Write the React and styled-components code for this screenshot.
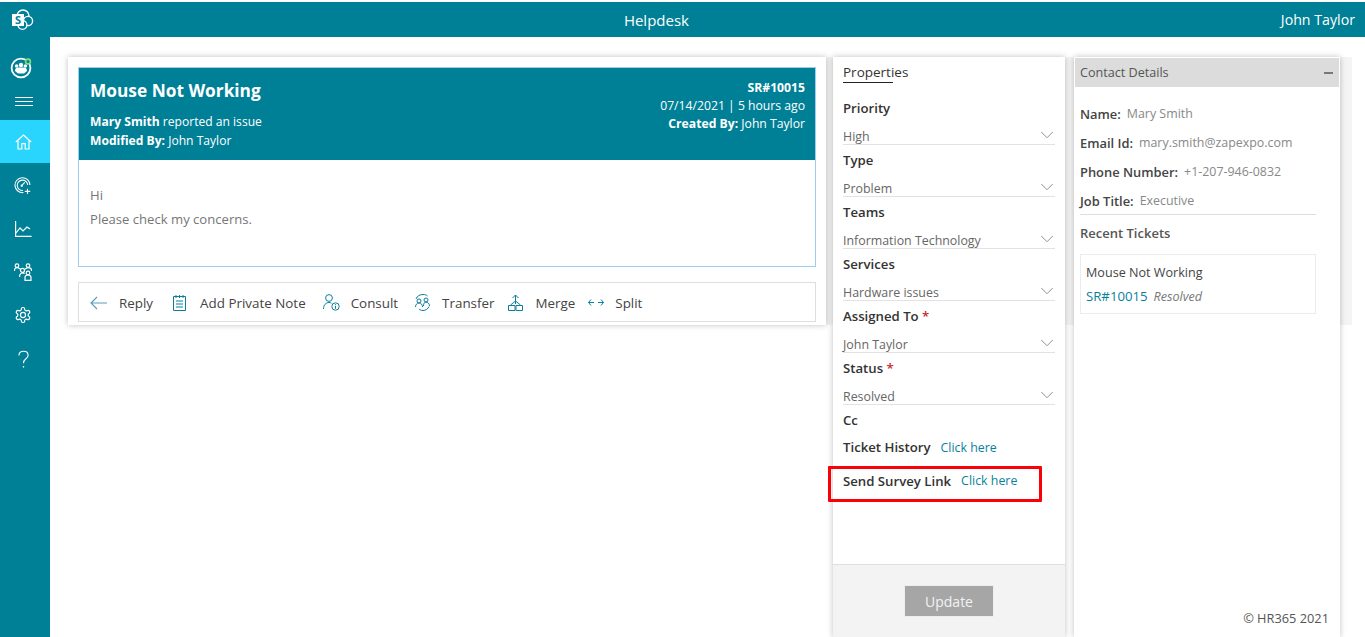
import React from "react";
import styled, { createGlobalStyle } from "styled-components";
import { FiChevronDown } from "react-icons/fi";

const Global = createGlobalStyle`
  html, body {
    margin: 0;
    height: 100%;
    overflow: hidden;
    background: #fff;
    font-family: "Open Sans", "Liberation Sans", sans-serif;
  }
  * { box-sizing: border-box; }
`;

const TEAL = "#008096";

const Page = styled.div`
  height: 637px;
  padding-top: 2px;
  background: #fff;
  display: flex;
  flex-direction: column;
`;

const TopBar = styled.header`
  height: 35px;
  flex: none;
  background: ${TEAL};
  color: #fff;
  display: flex;
  justify-content: space-between;
  align-items: center;
  padding-right: 10px;
`;

const LogoCell = styled.div`
  width: 44px;
  display: flex;
  justify-content: center;
`;

const AppTitle = styled.div`
  font-size: 15px;
  margin-left: -12px;
`;

const UserName = styled.div`
  font-size: 14.2px;
`;

const Body = styled.div`
  flex: 1;
  display: flex;
  min-height: 0;
`;

const Sidebar = styled.nav`
  width: 50px;
  flex: none;
  background: ${TEAL};
  display: flex;
  flex-direction: column;
  padding-top: 14px;
`;

const NavItem = styled.div`
  height: ${(p) => p.$h || 43}px;
  padding: ${(p) => p.$dy ?? 2}px ${(p) => p.$dx ?? 4}px 0 0;
  display: flex;
  align-items: center;
  justify-content: center;
  color: #fff;
  background: ${(p) => (p.$active ? "#29d4fd" : "transparent")};
`;

const Content = styled.main`
  flex: 1;
  padding: 20px 13px 0 18px;
`;

const Band = styled.div`
  height: 268px;
  background: #f4f4f4;
  display: flex;
  align-items: flex-start;
`;

const TicketPanel = styled.section`
  width: 758px;
  height: 268px;
  flex: none;
  background: #fff;
  padding: 10px;
  box-shadow: 0 0 6px rgba(0, 0, 0, 0.25);
`;

const TicketCard = styled.div`
  height: 200px;
  border: 1px solid #9fcdee;
  display: flex;
  flex-direction: column;
`;

const TicketHead = styled.div`
  height: 92px;
  flex: none;
  background: ${TEAL};
  color: #fff;
  padding: 12px 10px 0 11px;
  display: flex;
  justify-content: space-between;
`;

const TicketTitle = styled.h1`
  margin: 0 0 10px;
  font-size: 17.3px;
  line-height: 22px;
  font-weight: 700;
`;

const HeadLine = styled.div`
  font-size: 12.1px;
  line-height: 19px;
  b { font-weight: 700; }
`;

const HeadRight = styled.div`
  margin-top: -1px;
  text-align: right;
  ${HeadLine} { font-size: 12.2px; line-height: 18px; }
`;

const Message = styled.div`
  padding: 23px 11px 0;
  color: #767676;
  font-size: 13.1px;
  line-height: 24px;
`;

const Toolbar = styled.div`
  height: 40px;
  margin-top: 15px;
  border: 1px solid #dedede;
  display: flex;
  align-items: center;
  padding: 1px 0 0 11px;
`;

const ToolButton = styled.div`
  display: flex;
  align-items: center;
  gap: ${(p) => p.$gap}px;
  margin-right: ${(p) => p.$mr}px;
  font-size: 13.4px;
  color: #444;
  svg { flex: none; display: block; }
`;

const PropsPanel = styled.aside`
  width: 232px;
  height: 580px;
  flex: none;
  margin-left: 7px;
  background: #fff;
  box-shadow: 0 0 6px rgba(0, 0, 0, 0.25);
  display: flex;
  flex-direction: column;
`;

const PropsBody = styled.div`
  flex: 1;
  padding: 7px 10px 0;
`;

const TabTitle = styled.div`
  width: 50px;
  height: 19px;
  white-space: nowrap;
  font-size: 13.5px;
  line-height: 17px;
  font-weight: 500;
  color: #333;
  border-bottom: 1px solid #222;
  margin-bottom: 17px;
`;

const Field = styled.div`
  height: 52px;
`;

const Label = styled.div`
  font-size: 13.2px;
  line-height: 16px;
  font-weight: 600;
  color: #333;
  white-space: nowrap;
  span { color: #c8252b; }
`;

const Select = styled.div`
  height: 25px;
  margin-top: 4px;
  padding-top: 7px;
  border-bottom: 1px solid #e2e2e2;
  display: flex;
  justify-content: space-between;
  font-size: 12.4px;
  line-height: 19px;
  color: #666;
  svg { flex: none; color: #888; margin: -3px -3px 0 0; }
`;

const LinkRow = styled.div`
  display: flex;
  align-items: center;
  gap: 10px;
  height: 20px;
  margin-top: ${(p) => p.$mt || 0}px;
`;

const Link = styled.span`
  color: #0a7f9c;
  font-size: 12.4px;
`;

const SurveyBox = styled(LinkRow)`
  width: 214px;
  height: 36px;
  margin: 9px 0 0 -15px;
  padding: 0 0 6px 12px;
  border: 3px solid #fb0007;
  border-radius: 1px;
  ${Link} { margin-top: -2px; }
`;

const PropsFooter = styled.div`
  height: 73px;
  flex: none;
  background: #f3f3f3;
  border-top: 1px solid #dedede;
  display: flex;
  justify-content: center;
  padding-top: 20px;
`;

const UpdateButton = styled.button`
  width: 90px;
  height: 32px;
  border: 1px solid #ededed;
  background: #a6a6a6;
  color: #f2f2f2;
  font: 14px "Open Sans", sans-serif;
  padding: 0;
`;

const ContactPanel = styled.aside`
  width: 266px;
  height: 580px;
  flex: none;
  margin-left: 9px;
  background: #fff;
  box-shadow: 0 0 6px rgba(0, 0, 0, 0.25);
  display: flex;
  flex-direction: column;
`;

const ContactHead = styled.div`
  height: 29px;
  margin: 1px 1px 0;
  background: #dcdcdc;
  color: #555;
  display: flex;
  align-items: center;
  justify-content: space-between;
  padding: 0 5px;
  font-size: 12.6px;
  font-weight: 500;
`;

const Minus = styled.i`
  width: 9px;
  height: 2px;
  background: #777;
  margin-right: 1px;
`;

const ContactBody = styled.div`
  flex: 1;
  padding: 12px 24px 0 6px;
  display: flex;
  flex-direction: column;
`;

const InfoRow = styled.div`
  height: 29px;
  flex: none;
  display: flex;
  align-items: center;
  gap: 6px;
  font-size: 12.4px;
  color: #888;
  white-space: nowrap;
  b { font-weight: 600; color: #444; font-size: 12.9px; }
`;

const Divider = styled.hr`
  width: 100%;
  border: 0;
  border-top: 1px solid #dedede;
  margin: -1px 0 9px;
`;

const SectionTitle = styled.div`
  font-size: 13px;
  line-height: 18px;
  font-weight: 600;
  color: #555;
  margin-bottom: 12px;
`;

const RecentCard = styled.div`
  height: 60px;
  flex: none;
  border: 1px solid #ececec;
  padding: 9px 5px;
`;

const RecentTitle = styled.div`
  font-size: 12.6px;
  line-height: 18px;
  font-weight: 500;
  color: #444;
  margin-bottom: 5px;
`;

const RecentMeta = styled.div`
  font-size: 13.2px;
  line-height: 18px;
  color: #0a7f9c;
  em { margin-left: 6px; font-size: 12.6px; color: #777; }
`;

const Copyright = styled.div`
  margin-top: auto;
  padding: 0 5px 10px 0;
  margin-right: -18px;
  text-align: right;
  font-size: 12.8px;
  color: #555;
`;

const SharePointLogo = () => (
  <svg width="24" height="22" viewBox="0 0 24 22">
    <circle cx="13" cy="7" r="6" fill={TEAL} stroke="#fff" strokeWidth="1.4" />
    <circle cx="18" cy="12" r="4.6" fill={TEAL} stroke="#fff" strokeWidth="1.4" />
    <circle cx="12.5" cy="16" r="4.4" fill={TEAL} stroke="#fff" strokeWidth="1.4" />
    <rect x="2" y="5" width="12" height="12" fill="#fff" />
    <text x="8" y="15" textAnchor="middle" fontSize="11" fontWeight="700" fill={TEAL} fontFamily="Open Sans">S</text>
  </svg>
);

const stroke = { fill: "none", stroke: "currentColor", strokeWidth: 1.2 };

const TeamIcon = () => (
  <svg width="26" height="24" viewBox="0 0 26 24">
    <circle cx="12" cy="13" r="9.4" {...stroke} strokeWidth="1.8" />
    <circle cx="12" cy="10" r="2.2" fill="#fff" />
    <circle cx="7.6" cy="11" r="1.8" fill="#fff" />
    <circle cx="16.4" cy="11" r="1.8" fill="#fff" />
    <path d="M6 16c0-2.600 1.600-3.500 3-3.500h6c1.400 0 3 .9 3 3.500l-3 2.500H9z" fill="#fff" />
    <circle cx="19" cy="6.500" r="2.400" fill={TEAL} stroke="#7be07b" strokeWidth="1.6" />
  </svg>
);

const MenuIcon = () => (
  <svg width="18" height="9" viewBox="0 0 18 9">
    <path d="M0 .5h18M0 4.500h18M0 8.500h18" stroke="#fff" strokeWidth="1" />
  </svg>
);

const HomeIcon = () => (
  <svg width="17" height="16" viewBox="0 0 17 16">
    <path d="M.8 8 8.500 1l7.700 7M3 6.400V15h3.800V9.600h3.400V15H14V6.400" {...stroke} />
  </svg>
);

const GaugeIcon = () => (
  <svg width="18" height="18" viewBox="0 0 20 20">
    <path d="M10.500 17.300A8.300 8.300 0 1 1 17.700 9" {...stroke} />
    <path d="M10 15a5.800 5.800 0 1 1 5.200-6" {...stroke} />
    <circle cx="8.600" cy="9.600" r="1.300" fill="#fff" />
    <path d="m9 9 3-3" {...stroke} />
    <path d="M15 13v6M12 16h6" {...stroke} />
  </svg>
);

const ChartIcon = () => (
  <svg width="17" height="16" viewBox="0 0 17 16">
    <path d="M.6 0v15.400H16.600M1 12l4-5 3 3 4-4 3 2" {...stroke} />
  </svg>
);

const OrgIcon = () => (
  <svg width="18" height="18" viewBox="0 0 18 18">
    <circle cx="3" cy="2.600" r="1.800" {...stroke} />
    <circle cx="14" cy="2.600" r="1.800" {...stroke} />
    <circle cx="8.500" cy="7.400" r="2" {...stroke} />
    <circle cx="14" cy="10" r="1.800" {...stroke} />
    <path d="M.4 8c0-2.400 1-3.400 2.600-3.400S5.600 5.600 6.800 6.400M17.600 8c0-2-1-3.400-3.600-3.400-1.200 0-2.200.8-3.400 1.800M5.600 14c0-2.500 1-4 2.900-4 .9 0 1.600.3 2 .8M11 17.400v-3c0-1.400 1.200-2.400 3-2.400s3 1 3 2.400v3z" {...stroke} />
  </svg>
);

const GearIcon = () => (
  <svg width="18" height="18" viewBox="0 0 24 24" fill="none" stroke="currentColor" strokeWidth="1.6">
    <path d="M12.220 2h-.44a2 2 0 0 0-2 2v.18a2 2 0 0 1-1 1.730l-.43.25a2 2 0 0 1-2 0l-.15-.08a2 2 0 0 0-2.730.73l-.22.38a2 2 0 0 0 .73 2.730l.15.1a2 2 0 0 1 1 1.720v.51a2 2 0 0 1-1 1.740l-.15.09a2 2 0 0 0-.73 2.730l.22.38a2 2 0 0 0 2.730.73l.15-.08a2 2 0 0 1 2 0l.43.25a2 2 0 0 1 1 1.730V20a2 2 0 0 0 2 2h.44a2 2 0 0 0 2-2v-.18a2 2 0 0 1 1-1.730l.43-.25a2 2 0 0 1 2 0l.15.08a2 2 0 0 0 2.730-.73l.22-.39a2 2 0 0 0-.73-2.730l-.15-.08a2 2 0 0 1-1-1.740v-.5a2 2 0 0 1 1-1.740l.15-.09a2 2 0 0 0 .73-2.730l-.22-.38a2 2 0 0 0-2.730-.73l-.15.08a2 2 0 0 1-2 0l-.43-.25a2 2 0 0 1-1-1.730V4a2 2 0 0 0-2-2z" />
    <circle cx="12" cy="12" r="3.400" />
  </svg>
);

const HelpIcon = () => (
  <svg width="11" height="19" viewBox="0 0 12 20">
    <path d="M1 5.500C1 2.800 3 1 6 1s5 1.800 5 4.300c0 2-1 3-2.600 4.200C6.800 10.700 6 11.500 6 14" {...stroke} />
    <circle cx="6" cy="18" r=".9" fill="#fff" />
  </svg>
);

const toolStroke = { fill: "none", stroke: "#0a7f9c", strokeWidth: 1 };

const ReplyIcon = () => (
  <svg width="17" height="14" viewBox="0 0 17 14">
    <path d="M7 1 1 7l6 6M1 7h16" fill="none" stroke="#5b9bb5" strokeWidth="1.1" />
  </svg>
);

const NoteIcon = () => (
  <svg width="13" height="16" viewBox="0 0 13 16">
    <path d="M.5 1.500h12v14H.5zM3 0v3M6.500 0v3M10 0v3M3 6h7M3 9h7M3 12h7" {...toolStroke} />
  </svg>
);

const ConsultIcon = () => (
  <svg width="17" height="17" viewBox="0 0 17 17">
    <circle cx="6" cy="4" r="3.400" {...toolStroke} />
    <path d="M.5 15c0-4 2.400-6.500 5.500-6.500 1 0 1.800.2 2.500.7" {...toolStroke} />
    <circle cx="12.500" cy="12.500" r="3.700" {...toolStroke} />
    <path d="M12.500 11.800v3M12.500 10v.8" {...toolStroke} />
  </svg>
);

const TransferIcon = () => (
  <svg width="17" height="17" viewBox="0 0 17 17">
    <circle cx="5" cy="7" r="2" {...toolStroke} />
    <circle cx="12" cy="6" r="2" {...toolStroke} />
    <path d="M1.500 13c0-2.500 1.500-4 3.500-4s3.500 1.500 3.500 4M9.500 12c0-2.500 1-4 2.500-4s3.500 1.500 3.500 4M2 5c1-3 4-4.500 7-4.500 2 0 3.500.5 4.500 1.500M15 12.500c-1 2.500-3.500 4-6 4-1.500 0-3-.5-4-1.500" {...toolStroke} />
  </svg>
);

const MergeIcon = () => (
  <svg width="15" height="17" viewBox="0 0 15 17">
    <path d="M7.500 10V1M4.500 4l3-3 3 3M7.500 7 2.500 11M7.500 7l5 4M.5 11.500h6.500v5H.5zM8 11.500h6.500v5H8z" {...toolStroke} />
  </svg>
);

const SplitIcon = () => (
  <svg width="16" height="7" viewBox="0 0 16 7">
    <path d="M3 .5 .5 3.500 3 6.500M.5 3.500H6M13 .5l2.500 3-2.500 3M15.500 3.500H10" {...toolStroke} />
  </svg>
);

const fields = [
  { label: "Priority", value: "High" },
  { label: "Type", value: "Problem" },
  { label: "Teams", value: "Information Technology" },
  { label: "Services", value: "Hardware issues" },
  { label: "Assigned To", value: "John Taylor", required: true },
  { label: "Status", value: "Resolved", required: true },
];

const tools = [
  { icon: <ReplyIcon />, text: "Reply", gap: 12, mr: 20 },
  { icon: <NoteIcon />, text: "Add Private Note", gap: 14, mr: 17 },
  { icon: <ConsultIcon />, text: "Consult", gap: 11, mr: 16 },
  { icon: <TransferIcon />, text: "Transfer", gap: 11, mr: 13 },
  { icon: <MergeIcon />, text: "Merge", gap: 13, mr: 13 },
  { icon: <SplitIcon />, text: "Split", gap: 11, mr: 0 },
];

const info = [
  ["Name:", "Mary Smith"],
  ["Email Id:", "mary.smith@zapexpo.com"],
  ["Phone Number:", "+1-207-946-0832"],
  ["Job Title:", "Executive"],
];

export default function App() {
  return (
    <Page>
      <Global />
      <TopBar>
        <LogoCell>
          <SharePointLogo />
        </LogoCell>
        <AppTitle>Helpdesk</AppTitle>
        <UserName>John Taylor</UserName>
      </TopBar>
      <Body>
        <Sidebar>
          <NavItem $h={32} $dy={0} $dx={6}><TeamIcon /></NavItem>
          <NavItem $h={37} $dy={0} $dx={2}><MenuIcon /></NavItem>
          <NavItem $active $dy={0}><HomeIcon /></NavItem>
          <NavItem><GaugeIcon /></NavItem>
          <NavItem><ChartIcon /></NavItem>
          <NavItem><OrgIcon /></NavItem>
          <NavItem><GearIcon /></NavItem>
          <NavItem $dy={6}><HelpIcon /></NavItem>
        </Sidebar>
        <Content>
          <Band>
            <TicketPanel>
              <TicketCard>
                <TicketHead>
                  <div>
                    <TicketTitle>Mouse Not Working</TicketTitle>
                    <HeadLine><b>Mary Smith</b> reported an issue</HeadLine>
                    <HeadLine><b>Modified By:</b> John Taylor</HeadLine>
                  </div>
                  <HeadRight>
                    <HeadLine><b>SR#10015</b></HeadLine>
                    <HeadLine>07/14/2021 | 5 hours ago</HeadLine>
                    <HeadLine><b>Created By:</b> John Taylor</HeadLine>
                  </HeadRight>
                </TicketHead>
                <Message>
                  <div>Hi</div>
                  <div>Please check my concerns.</div>
                </Message>
              </TicketCard>
              <Toolbar>
                {tools.map((t) => (
                  <ToolButton key={t.text} $gap={t.gap} $mr={t.mr}>
                    {t.icon}
                    {t.text}
                  </ToolButton>
                ))}
              </Toolbar>
            </TicketPanel>
            <PropsPanel>
              <PropsBody>
                <TabTitle>Properties</TabTitle>
                {fields.map((f) => (
                  <Field key={f.label}>
                    <Label>{f.label}{f.required && <span> *</span>}</Label>
                    <Select>
                      {f.value}
                      <FiChevronDown size={22} strokeWidth={1} />
                    </Select>
                  </Field>
                ))}
                <Label>Cc</Label>
                <LinkRow $mt={9}>
                  <Label>Ticket History</Label>
                  <Link>Click here</Link>
                </LinkRow>
                <SurveyBox>
                  <Label>Send Survey Link</Label>
                  <Link>Click here</Link>
                </SurveyBox>
              </PropsBody>
              <PropsFooter>
                <UpdateButton>Update</UpdateButton>
              </PropsFooter>
            </PropsPanel>
            <ContactPanel>
              <ContactHead>
                Contact Details
                <Minus />
              </ContactHead>
              <ContactBody>
                {info.map(([k, v]) => (
                  <InfoRow key={k}><b>{k}</b>{v}</InfoRow>
                ))}
                <Divider />
                <SectionTitle>Recent Tickets</SectionTitle>
                <RecentCard>
                  <RecentTitle>Mouse Not Working</RecentTitle>
                  <RecentMeta>SR#10015<em>Resolved</em></RecentMeta>
                </RecentCard>
                <Copyright>© HR365 2021</Copyright>
              </ContactBody>
            </ContactPanel>
          </Band>
        </Content>
      </Body>
    </Page>
  );
}
